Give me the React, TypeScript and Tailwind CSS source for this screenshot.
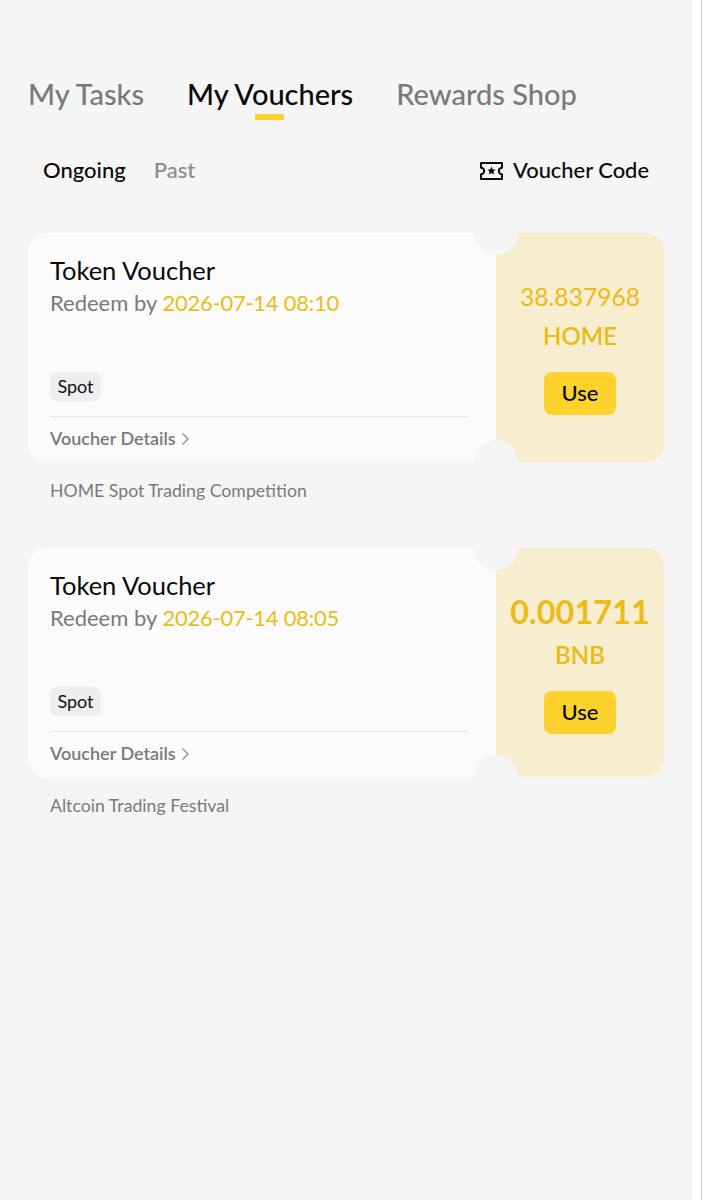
const vouchers = [
  {
    date: "2026-07-14 08:10",
    amount: "38.837968",
    amountClass: "h-[38px] text-[24.6px] leading-[38px] font-normal",
    token: "HOME",
    footer: "HOME Spot Trading Competition",
  },
  {
    date: "2026-07-14 08:05",
    amount: "0.001711",
    amountClass: "h-[46px] text-[32.5px] leading-[46px] font-bold",
    token: "BNB",
    footer: "Altcoin Trading Festival",
  },
];

function TicketIcon() {
  return (
    <svg className="translate-y-[1px]" width="23" height="20" viewBox="0 0 23 20" fill="none">
      <path
        d="M1 2h21v4.800a3.200 3.200 0 0 0 0 6.400V18H1v-4.800a3.200 3.200 0 0 0 0-6.400z"
        stroke="#0a0a0a"
        strokeWidth="2"
        strokeLinejoin="round"
      />
      <path
        d="M11.500 5.600l1.200 2.900 3 .2-2.300 1.900.8 3-2.700-1.700-2.700 1.700.8-3-2.300-1.900 3-.2z"
        fill="#0a0a0a"
      />
    </svg>
  );
}

function VoucherCard({ voucher }: { voucher: (typeof vouchers)[number] }) {
  return (
    <div className="mb-[45px]">
      <div className="relative flex h-[229px] overflow-hidden rounded-[18px]">
        <div className="flex w-[468px] flex-col bg-[#fbfbfb] pr-[28px] pl-[22px]">
          <div className="flex h-[184px] flex-col border-b border-[#e6e6e6]">
            <div className="mt-[21px] text-[25.500px] leading-[32px] text-[#0a0a0a]">
              Token Voucher
            </div>
            <div className="mt-[1px] text-[22px] leading-[32px] text-[#7a7a7a]">
              Redeem by{" "}
              <span className="tracking-[-0.25px] text-[#ecbb16]">{voucher.date}</span>
            </div>
            <span className="mt-[53px] flex h-[29px] w-[51px] items-center justify-center rounded-[7px] bg-[#eeeeee] text-[18px] text-[#111111]">
              Spot
            </span>
          </div>
          <div className="flex h-[43px] items-center gap-[5px] text-[18px] font-semibold text-[#7a7a7a]">
            Voucher Details
            <svg width="9" height="14" viewBox="0 0 9 14" fill="none">
              <path d="M1.500 1.500L7 7l-5.500 5.500" stroke="#8a8a8a" strokeWidth="1.300" />
            </svg>
          </div>
        </div>
        <div className="flex flex-1 flex-col items-center justify-center bg-[#f7edcf] pb-[3px]">
          <div className={`text-[#ecbb16] ${voucher.amountClass}`}>{voucher.amount}</div>
          <div className="mt-[2px] text-[24px] leading-[36px] font-semibold text-[#ecbb16]">
            {voucher.token}
          </div>
          <button className="mt-[18px] h-[43px] w-[72px] rounded-[8px] bg-[#fdd22d] pb-[2px] text-[22px] font-medium text-[#0a0a0a]">
            Use
          </button>
        </div>
        <div className="absolute top-[-22px] left-[446px] h-[44px] w-[44px] rounded-full bg-[#f5f5f5]" />
        <div className="absolute bottom-[-22px] left-[446px] h-[44px] w-[44px] rounded-full bg-[#f5f5f5]" />
      </div>
      <div className="mt-[17px] pl-[22px] text-[17.700px] leading-[24px] text-[#7a7a7a]">
        {voucher.footer}
      </div>
    </div>
  );
}

export default function App() {
  return (
    <div className="flex min-h-[1200px] bg-white font-['Lato','Liberation_Sans',sans-serif]">
      <main className="w-[692px] bg-[#f5f5f5] px-[28px] pt-[74px]">
        <nav className="flex gap-[43px] text-[29px] leading-[40px] font-medium text-[#7a7a7a]">
          <span>My Tasks</span>
          <span className="relative text-[#0a0a0a]">
            My Vouchers
            <span className="absolute top-[40px] left-[68px] h-[6px] w-[29px] bg-[#fdd22d]" />
          </span>
          <span>Rewards Shop</span>
        </nav>

        <div className="mt-[40px] flex items-center justify-between px-[15px] text-[22px] leading-[32px]">
          <div className="flex gap-[28px] font-medium">
            <span className="text-[#0a0a0a]">Ongoing</span>
            <span className="text-[#8a8a8a]">Past</span>
          </div>
          <div className="flex items-center gap-[10px] text-[21.900px] font-medium text-[#0a0a0a]">
            <TicketIcon />
            Voucher Code
          </div>
        </div>

        <div className="mt-[47px] w-[636px]">
          {vouchers.map((voucher) => (
            <VoucherCard key={voucher.date} voucher={voucher} />
          ))}
        </div>
      </main>
      <div className="ml-[9px] w-[1px] bg-[#c8c8c8]" />
    </div>
  );
}
